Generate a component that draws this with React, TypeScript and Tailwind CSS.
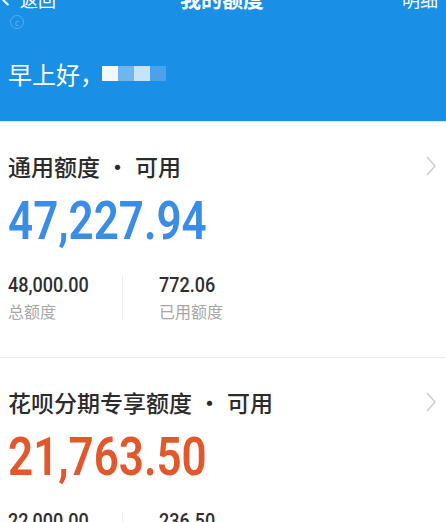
import { ChevronLeft } from 'lucide-react'

type Quota = {
  title: string
  available: string
  total: string
  used: string
  color: string
}

const QUOTAS: Quota[] = [
  { title: '通用额度', available: '47,227.94', total: '48,000.00', used: '772.06', color: 'text-[#3a8de6]' },
  { title: '花呗分期专享额度', available: '21,763.50', total: '22,000.00', used: '236.50', color: 'text-[#e0582c]' },
]

const cjk = "font-['Noto_Sans_CJK_SC','Noto_Sans',sans-serif]"
const num = "font-['Roboto','Liberation_Sans',sans-serif]"

function Chevron() {
  return (
    <svg width="10" height="20" viewBox="0 0 10 20" className="shrink-0">
      <polyline points="1,1 9,10 1,19" fill="none" stroke="#cfcfcf" strokeWidth="1.6" />
    </svg>
  )
}

function QuotaCard({ q }: { q: Quota }) {
  return (
    <div className="bg-white pt-[28px] pb-[35px] pl-[8px] pr-[10px] border-b border-[#ececec]">
      <div className="flex items-center justify-between">
        <p className={`${cjk} text-[23px] leading-[32px] font-medium text-[#2b2b2b]`}>
          {q.title}
          <span className="mx-[6px]">·</span>
          可用
        </p>
        <Chevron />
      </div>

      <div className={`mt-[13px] h-[53px] ${num} text-[53px] leading-[53px] font-semibold ${q.color}`}>
        <span className="inline-block origin-left scale-x-[0.83]">{q.available}</span>
      </div>

      <div className="mt-[25px] flex">
        <div className="w-[114px]">
          <p className={`${num} text-[20px] leading-[24px] font-medium text-[#2e2e2e]`}>
            <span className="inline-block origin-left scale-x-[0.9]">{q.total}</span>
          </p>
          <p className={`${cjk} mt-[3px] text-[16px] leading-[22px] text-[#a6a6a6]`}>总额度</p>
        </div>
        <div className="w-px bg-[#efefef] mt-[2px] mb-[2px]" />
        <div className="pl-[36px]">
          <p className={`${num} text-[20px] leading-[24px] font-medium text-[#2e2e2e]`}>
            <span className="inline-block origin-left scale-x-[0.9]">{q.used}</span>
          </p>
          <p className={`${cjk} mt-[3px] text-[16px] leading-[22px] text-[#a6a6a6]`}>已用额度</p>
        </div>
      </div>
    </div>
  )
}

export default function App() {
  return (
    <div className="w-[446px] h-[522px] overflow-hidden bg-white">
      {/* Header */}
      <div className="bg-[#1a8fe6] h-[122px] border-b border-[#d3e8f8] text-white flex flex-col">
        <div className={`${cjk} -mt-[13px] h-[24px] shrink-0 flex items-center justify-between`}>
          <div className="flex items-center">
            <ChevronLeft className="w-[22px] h-[22px] -ml-[6px]" strokeWidth={2.2} />
            <span className="ml-[4px] text-[18px]">返回</span>
          </div>
          <span className="text-[21px] font-bold pr-[14px]">我的额度</span>
          <span className="text-[18px] pr-[8px]">明细</span>
        </div>
        <div className="ml-[10px] mt-[4px] w-[14px] h-[14px] shrink-0 rounded-full border border-white/25 flex items-center justify-center text-[9px] leading-none text-white/30">
          c
        </div>
        <div className="flex items-center pl-[8px] mt-[29px]">
          <span className={`${cjk} text-[24px] leading-[32px]`}>早上好，</span>
          <div className="flex -ml-[2px] mb-[2px]">
            <div className="w-[16px] h-[15px] bg-[#f2f8fe]" />
            <div className="w-[16px] h-[15px] bg-[#6fb5ee]" />
            <div className="w-[16px] h-[15px] bg-[#c8e2f9]" />
            <div className="w-[16px] h-[15px] bg-[#4aa3ea]" />
          </div>
        </div>
      </div>

      {QUOTAS.map((q) => (
        <QuotaCard key={q.title} q={q} />
      ))}
    </div>
  )
}
